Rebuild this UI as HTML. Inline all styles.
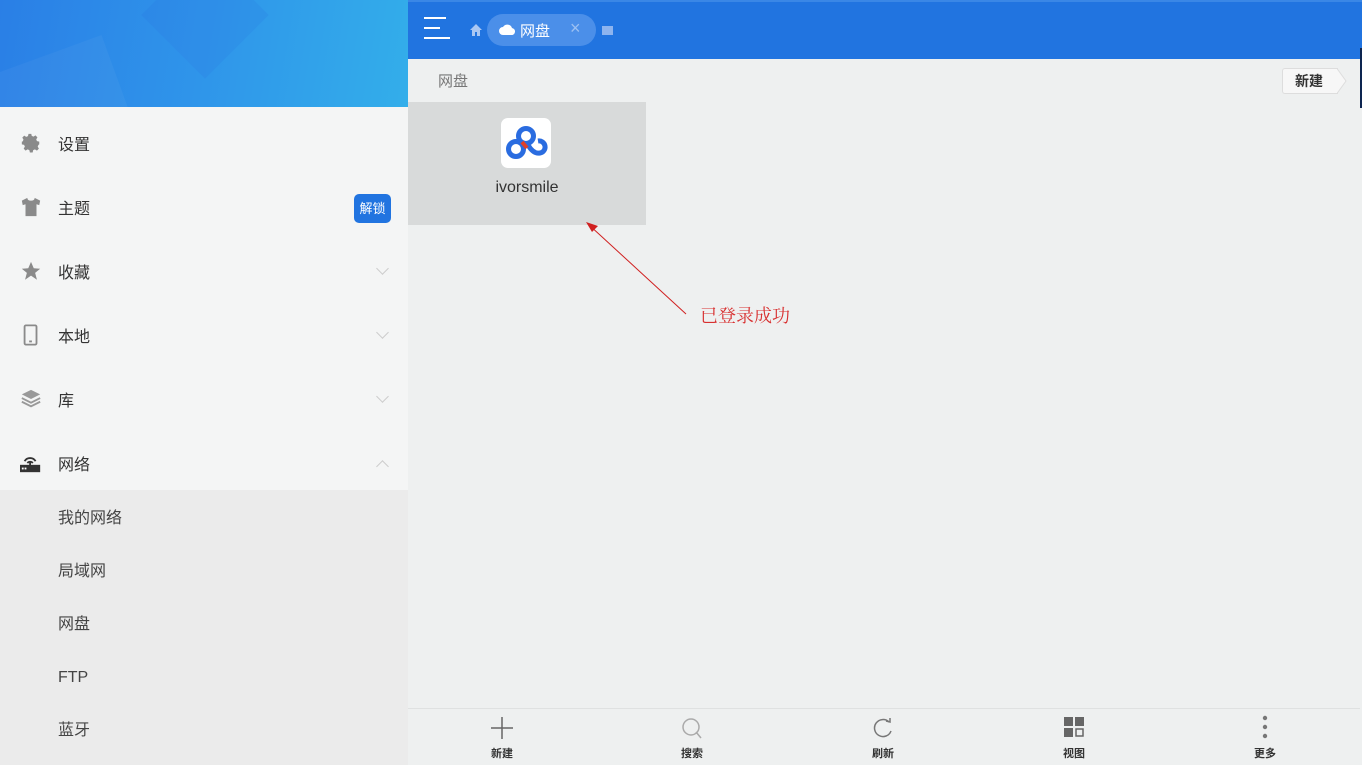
<!DOCTYPE html>
<html><head><meta charset="utf-8"><style>
*{margin:0;padding:0;box-sizing:border-box}
body{width:1362px;height:765px;overflow:hidden;font-family:"Liberation Sans","Noto Sans CJK SC",sans-serif;background:#eef0f0;position:relative}
#side{position:absolute;left:0;top:0;width:408px;height:765px;background:#f4f5f5}
#hero{position:absolute;left:0;top:0;width:408px;height:107px;background:linear-gradient(100deg,#2a7fe6 0%,#2f95ea 50%,#33aeea 100%);overflow:hidden}
.item{position:absolute;left:0;width:408px;height:64px;display:flex;align-items:center}
.item .ic{position:absolute;left:20px;width:22px;height:22px}
.item .t{position:absolute;left:58px;font-size:16px;color:#333}
.chev{position:absolute;left:378px;width:9px;height:9px;border-right:1px solid #ccc;border-bottom:1px solid #ccc;transform:rotate(45deg)}
#sub{position:absolute;left:0;top:490px;width:408px;height:275px;background:#ebebeb}
.s{position:absolute;left:58px;font-size:16px;color:#444;height:20px;line-height:20px}
#top{position:absolute;left:408px;top:0;width:954px;height:59px;background:#2174e0;border-top:2px solid #3a87e6}
#main{position:absolute;left:408px;top:59px;width:952px;height:706px;background:#eef0f0}
#bottom{position:absolute;left:408px;top:708px;width:952px;height:57px;background:#eef0f0;border-top:1px solid #dfe1e1}
.b{position:absolute;top:0;width:60px;text-align:center}
.b span{position:absolute;top:36px;left:0;width:60px;font-size:11px;font-weight:bold;color:#333}
</style></head><body>
<div id="side">
 <div id="hero">
  <div style="position:absolute;left:160px;top:-30px;width:90px;height:90px;background:rgba(40,110,220,.15);transform:rotate(45deg)"></div>
  <div style="position:absolute;left:-40px;top:60px;width:160px;height:80px;background:rgba(255,255,255,.04);transform:rotate(-20deg)"></div>
 </div>
 <div class="item" style="top:111px"><svg class="ic" viewBox="0 0 24 24"><path fill="#8a8a8a" d="M12 8a4 4 0 100 8 4 4 0 000-8zm9 5.5v-3l-2.5-.6-.8-1.9 1.3-2.2-2.1-2.1-2.2 1.3-1.9-.8L12.3 2h-3l-.6 2.5-1.9.8-2.2-1.3-2.1 2.1 1.3 2.2-.8 1.9L2 10.5v3l2.5.6.8 1.9-1.3 2.2 2.1 2.1 2.2-1.3 1.9.8.6 2.5h3l.6-2.5 1.9-.8 2.2 1.3 2.1-2.1-1.3-2.2.8-1.9z"/></svg><span class="t">设置</span></div>
 <div class="item" style="top:175px"><svg class="ic" viewBox="0 0 24 24"><path fill="#8a8a8a" d="M8 2l-6 3 1 5 3-1v13h12V9l3 1 1-5-6-3c0 2-1.5 3-4 3S8 4 8 2z"/></svg><span class="t">主题</span>
  <div style="position:absolute;left:354px;top:19px;width:37px;height:29px;background:#2174e0;border-radius:5px;color:#fff;font-size:13px;line-height:29px;text-align:center">解锁</div></div>
 <div class="item" style="top:239px"><svg class="ic" viewBox="0 0 24 24"><path fill="#8a8a8a" d="M12 2l3 7 7 .5-5.5 4.5 2 7.5L12 17l-6.5 4.5 2-7.5L2 9.5 9 9z"/></svg><span class="t">收藏</span><div class="chev" style="top:25px"></div></div>
 <div class="item" style="top:303px"><svg class="ic" viewBox="0 0 24 24"><rect x="5" y="1.5" width="13" height="21" rx="1.5" fill="none" stroke="#8a8a8a" stroke-width="2"/><rect x="10" y="18" width="3" height="2" fill="#8a8a8a"/></svg><span class="t">本地</span><div class="chev" style="top:25px"></div></div>
 <div class="item" style="top:367px"><svg class="ic" viewBox="0 0 24 24"><path fill="#999" d="M12 2l10 5-10 5L2 7z"/><path fill="none" stroke="#999" stroke-width="2" d="M2 11l10 5 10-5M2 15l10 5 10-5"/></svg><span class="t">库</span><div class="chev" style="top:25px"></div></div>
 <div class="item" style="top:431px"><svg class="ic" viewBox="0 0 24 24"><rect x="0" y="14" width="22" height="8" fill="#333"/><rect x="2" y="17" width="2" height="2" fill="#fff"/><rect x="5" y="17" width="2" height="2" fill="#fff"/><path d="M5 10a7 7 0 0112 0M8 12a4 4 0 016 0" fill="none" stroke="#333" stroke-width="2"/><rect x="10" y="11" width="2" height="4" fill="#333"/></svg><span class="t">网络</span><div class="chev" style="top:31px;transform:rotate(225deg)"></div></div>
 <div id="sub">
  <div class="s" style="top:19px">我的网络</div>
  <div class="s" style="top:72px">局域网</div>
  <div class="s" style="top:125px">网盘</div>
  <div class="s" style="top:178px">FTP</div>
  <div class="s" style="top:231px">蓝牙</div>
 </div>
</div>
<div id="main">
 <div style="position:absolute;left:30px;top:11px;font-size:15px;color:#777">网盘</div>
 <div style="position:absolute;left:874px;top:9px;width:56px;height:26px;background:#f7f7f7;border:1px solid #ddd;border-right:none;border-radius:3px 0 0 3px;font-size:14px;font-weight:bold;color:#333;line-height:24px;padding-left:12px">新建</div>
 <svg style="position:absolute;left:929px;top:9px" width="10" height="26"><path d="M0 0.5L9 13 0 25.5" fill="#f7f7f7" stroke="#ddd"/></svg>
 <div style="position:absolute;left:0;top:43px;width:238px;height:123px;background:#d8dada"></div>
 <div style="position:absolute;left:93px;top:59px;width:50px;height:50px;background:#fff;border-radius:7px"></div>
 <svg style="position:absolute;left:93px;top:59px" width="50" height="50" viewBox="0 0 50 50"><g fill="none" stroke="#2a6ce0" stroke-width="5"><circle cx="25" cy="18" r="7.5"/><circle cx="15" cy="31" r="7.5"/><path d="M27 27c3 5 7 9 12 8a6 6 0 00-2-12"/></g><path d="M21 24l5 6" stroke="#e0402a" stroke-width="4"/></svg>
 <div style="position:absolute;left:0;top:120px;width:238px;text-align:center;font-size:16px;color:#333">ivorsmile</div>
 <svg style="position:absolute;left:175px;top:160px" width="120" height="100"><line x1="5" y1="5" x2="103" y2="95" stroke="#d02020" stroke-width="1"/><path d="M3 3l12 4-6 6z" fill="#d02020"/></svg>
 <div style="position:absolute;left:292px;top:243px;font-family:'Noto Serif CJK SC',serif;font-size:18px;color:#d83030">已登录成功</div>
</div>
<div id="top">
 <div style="position:absolute;left:16px;top:15px;width:22px;height:2px;background:#fff"></div>
 <div style="position:absolute;left:16px;top:25px;width:16px;height:2px;background:#fff"></div>
 <div style="position:absolute;left:16px;top:35px;width:26px;height:2px;background:#fff"></div>
 <svg style="position:absolute;left:62px;top:22px" width="12" height="12" viewBox="0 0 12 12"><path d="M6 0L0 6h2v6h3V8h2v4h3V6h2z" fill="#a9c7f3"/></svg>
 <div style="position:absolute;left:79px;top:12px;width:109px;height:32px;background:#4b8fe9;border-radius:16px"></div>
 <svg style="position:absolute;left:91px;top:21px" width="16" height="12" viewBox="0 0 16 12"><path d="M4 12a4 4 0 010-8 5 5 0 019 1 3.5 3.5 0 01-1 7z" fill="#fff"/></svg>
 <div style="position:absolute;left:112px;top:18px;font-size:15px;color:#fff">网盘</div>
 <div style="position:absolute;left:162px;top:16px;font-size:18px;color:#9cc0f2">×</div>
 <div style="position:absolute;left:194px;top:24px;width:11px;height:9px;background:#8db4ef"></div>
</div>
<div id="bottom">
 <div class="b" style="left:64px"><svg style="position:absolute;left:19px;top:8px" width="22" height="22"><path d="M11 0v22M0 11h22" stroke="#666" stroke-width="1.5"/></svg><span>新建</span></div>
 <div class="b" style="left:254px"><svg style="position:absolute;left:19px;top:8px" width="22" height="22"><circle cx="10" cy="10" r="8" fill="none" stroke="#aaa" stroke-width="1.5"/><path d="M15 15l5 6" stroke="#aaa" stroke-width="1.5"/></svg><span>搜索</span></div>
 <div class="b" style="left:445px"><svg style="position:absolute;left:19px;top:8px" width="22" height="22"><path d="M17 5A8.5 8.5 0 1019 14" fill="none" stroke="#777" stroke-width="1.5"/><path d="M14 4l4 1 0-4" fill="none" stroke="#777" stroke-width="1.5"/></svg><span>刷新</span></div>
 <div class="b" style="left:636px"><svg style="position:absolute;left:20px;top:8px" width="20" height="20"><rect x="0" y="0" width="9" height="9" fill="#666"/><rect x="11" y="0" width="9" height="9" fill="#666"/><rect x="0" y="11" width="9" height="9" fill="#666"/><rect x="12" y="12" width="7" height="7" fill="none" stroke="#666" stroke-width="1.5"/></svg><span>视图</span></div>
 <div class="b" style="left:827px"><svg style="position:absolute;left:27px;top:6px" width="6" height="26"><circle cx="3" cy="3" r="2.2" fill="#777"/><circle cx="3" cy="12" r="2.2" fill="#777"/><circle cx="3" cy="21" r="2.2" fill="#777"/></svg><span>更多</span></div>
</div>
<div style="position:absolute;left:1360px;top:48px;width:2px;height:60px;background:#0d2550"></div>
</body></html>
